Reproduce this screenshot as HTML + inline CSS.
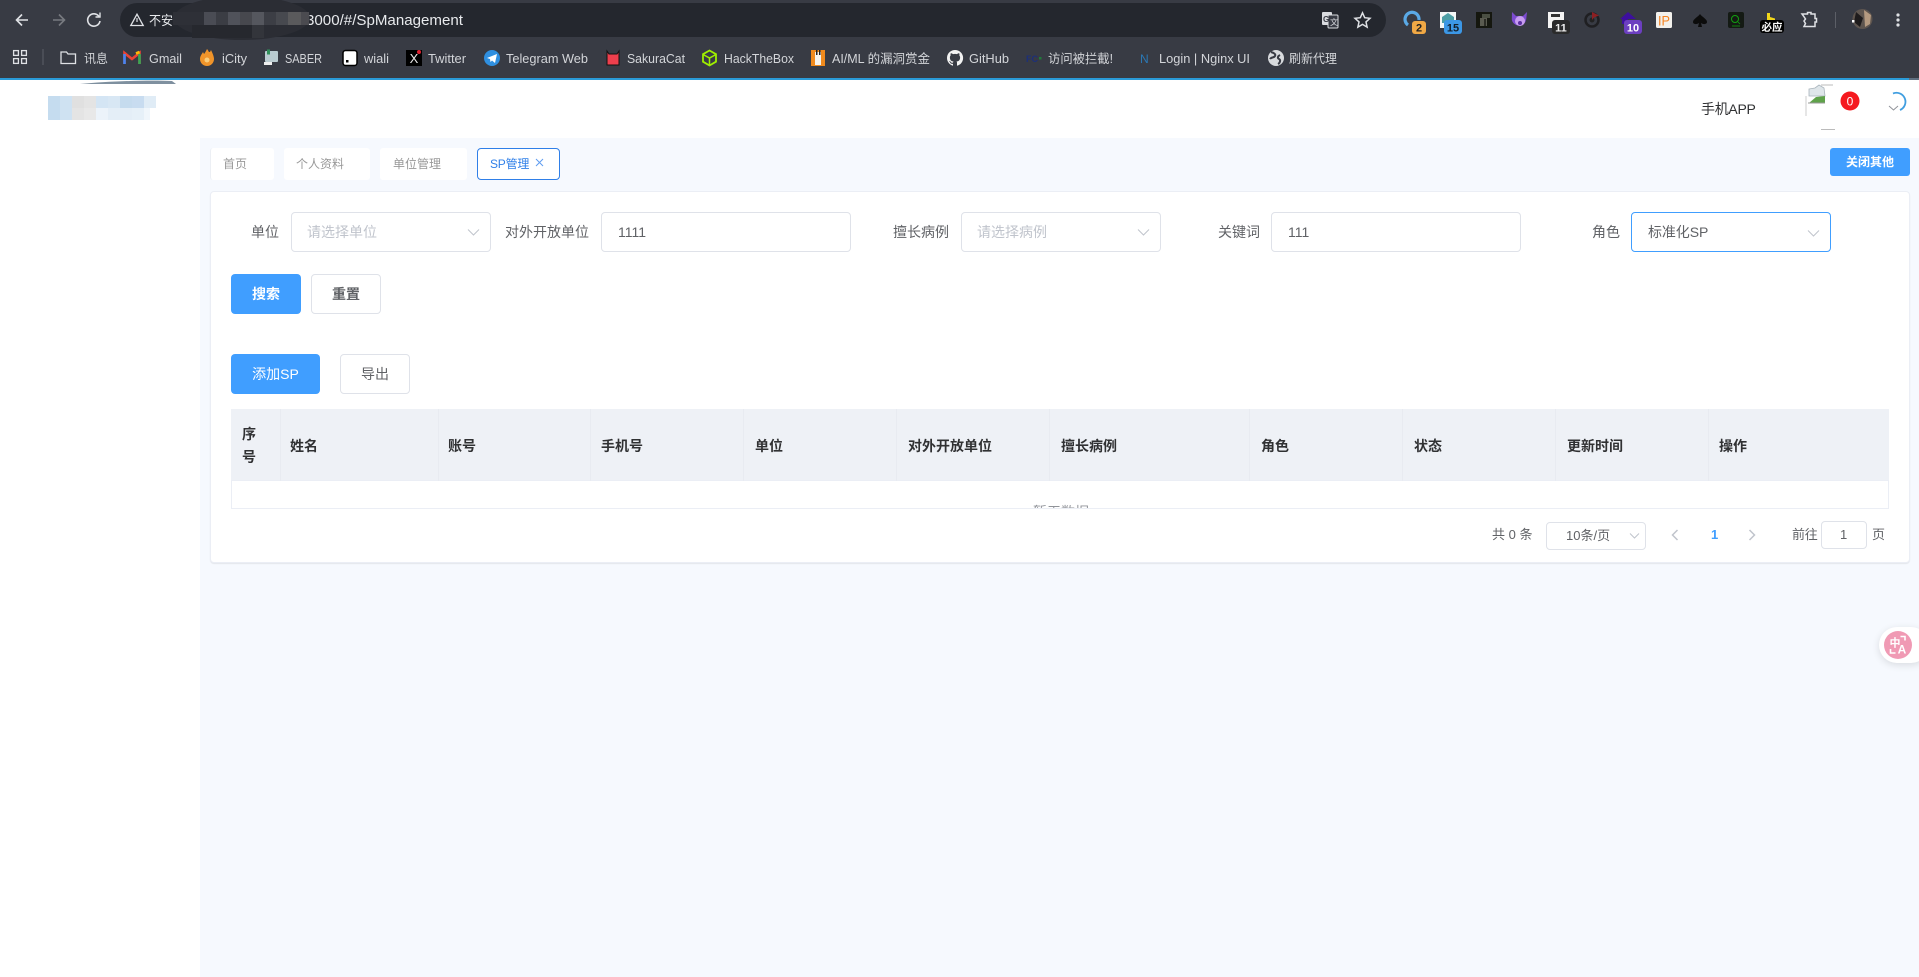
<!DOCTYPE html>
<html lang="zh"><head><meta charset="utf-8"><title>SP管理</title>
<style>
*{box-sizing:border-box}
html,body{margin:0;padding:0;width:1919px;height:977px;overflow:hidden;background:#fff;font-family:"Liberation Sans","Noto Sans CJK SC",sans-serif;color:#606266}
.a{position:absolute}
.t{position:absolute;white-space:nowrap;font-size:14px;line-height:20px}
.box{position:absolute;background:#fff;border:1px solid #dfe2e9;border-radius:4px}
.tab{position:absolute;top:148px;height:32px;background:#fff;border-radius:3px;font-size:12px;line-height:32px;color:#999;white-space:nowrap}
.btn{position:absolute;height:40px;border-radius:4px;font-size:14px;line-height:40px;text-align:center;white-space:nowrap}
.pri{background:#409eff;color:#fff}
.def{background:#fff;border:1px solid #dfe2e9;color:#606266;line-height:38px}
.th{position:absolute;top:436px;font-size:14px;line-height:20px;font-weight:700;color:#303133;white-space:nowrap}
.vl{position:absolute;top:409px;height:72px;width:1px;background:#e8ebf1}
</style></head><body>

<svg class="a" style="left:0;top:0" width="1919" height="80" viewBox="0 0 1919 80" font-family="'Liberation Sans','Noto Sans CJK SC',sans-serif">
<rect width="1919" height="78" fill="#383b44"/>
<rect x="120" y="3" width="1266" height="34" rx="17" fill="#24272e"/>
<rect x="0" y="78" width="1909" height="2" fill="#2a9bd8"/>
<rect x="1909" y="78" width="10" height="2" fill="#5e6f80"/>
<!-- nav -->
<g fill="none" stroke="#dfe1e5" stroke-width="1.6">
<path d="M28 20H17M22 14.5L16.5 20L22 25.5"/>
<path d="M53 20H64M59 14.5L64.5 20L59 25.5" stroke="#777a80"/>
<path d="M99 16.5A6.2 6.2 0 1 0 100 21"/><path d="M100 12.5V17H95.5" stroke-width="1.4"/>
<path d="M137 14.2L130.8 25.5H143.2Z" stroke-width="1.3"/><path d="M137 18v4" stroke-width="1.2"/>
</g>
<text x="149" y="25" font-size="13" fill="#e8eaed" textLength="24" lengthAdjust="spacingAndGlyphs">不安</text>
<text x="306" y="25" font-size="14.5" fill="#e8eaed" textLength="157" lengthAdjust="spacingAndGlyphs">3000/#/SpManagement</text>
<ellipse cx="242" cy="18" rx="68" ry="22" fill="#2b2d34"/>
<g>
<rect x="173" y="12" width="31" height="13" fill="#2e3037"/>
<rect x="204" y="12" width="12" height="13" fill="#4a4c54"/><rect x="216" y="12" width="12" height="13" fill="#3b3d44"/>
<rect x="228" y="12" width="12" height="13" fill="#50525a"/><rect x="240" y="12" width="12" height="13" fill="#47484e"/>
<rect x="252" y="12" width="12" height="13" fill="#55575e"/><rect x="264" y="12" width="12" height="13" fill="#3c3e45"/>
<rect x="276" y="12" width="12" height="13" fill="#47494f"/><rect x="288" y="12" width="13" height="13" fill="#5a5a5c"/>
<rect x="301" y="12" width="8" height="13" fill="#4b4b50"/>
<rect x="192" y="25" width="60" height="13" fill="#26282e"/><rect x="252" y="25" width="12" height="13" fill="#33353b"/>
</g>
<!-- translate + star -->
<rect x="1322" y="12" width="10" height="13" rx="1" fill="#dadce0"/>
<rect x="1328" y="15" width="10" height="13" rx="1" fill="#383b44" stroke="#dadce0"/>
<text x="1323" y="22" font-size="8" font-weight="700" fill="#383b44">G</text>
<text x="1330" y="25" font-size="8" fill="#dadce0">文</text>
<path d="M1362.5 12.8l2.2 4.9 5.3.6-4 3.600 1.100 5.200-4.600-2.700-4.600 2.700 1.100-5.200-4-3.600 5.300-.6z" fill="none" stroke="#dfe1e5" stroke-width="1.5"/>
<!-- extensions -->
<path d="M1408 25A7 7 0 1 1 1419 20" fill="none" stroke="#5aa9e6" stroke-width="3.2"/>
<rect x="1412" y="21" width="14" height="13" rx="3" fill="#f0a845"/>
<text x="1419" y="31.5" font-size="11" font-weight="700" fill="#222" text-anchor="middle">2</text>
<rect x="1440" y="12" width="16" height="16" fill="#f4f7f7"/><path d="M1448 13l6 4v6h-12v-6z" fill="#4d9fa5"/>
<rect x="1444" y="20" width="18" height="14" rx="3" fill="#3c97e6"/>
<text x="1453" y="31.5" font-size="11" font-weight="700" fill="#14202c" text-anchor="middle">15</text>
<rect x="1476" y="12" width="16" height="16" fill="#15170f"/><rect x="1482" y="14" width="8" height="4" fill="#4a4f42"/><rect x="1480" y="18" width="7" height="8" fill="#5a5b50"/><rect x="1484" y="19" width="2" height="7" fill="#2b2c25"/>
<path d="M1512 12l4 4h7l4-4-.8 7.500a7.300 7.300 0 0 1-14.400 0z" fill="#7c4bd0"/><circle cx="1520" cy="21" r="5" fill="#c79cf0"/><circle cx="1520" cy="23" r="2" fill="#5b2fa0"/>
<rect x="1548" y="12" width="16" height="16" fill="#f4f4f4"/><rect x="1551" y="14" width="9" height="3" fill="#333"/>
<rect x="1552" y="20" width="18" height="14" rx="3" fill="#2a2a2a"/>
<text x="1561" y="31.5" font-size="11" font-weight="700" fill="#eee" text-anchor="middle">11</text>
<circle cx="1592" cy="20" r="6.5" fill="none" stroke="#1f1f22" stroke-width="2.5"/><circle cx="1592" cy="20" r="2.5" fill="#222"/><path d="M1592 20V12l7 3.5-5 2z" fill="#8c1f22"/>
<path d="M1628 12l8 7h-16z" fill="#3d0f9e"/><rect x="1622" y="19" width="6" height="5" fill="#3d0f9e"/>
<rect x="1624" y="20" width="18" height="14" rx="3" fill="#6c3fc0"/>
<text x="1633" y="31.5" font-size="11" font-weight="700" fill="#fff" text-anchor="middle">10</text>
<rect x="1656" y="12" width="16" height="16" rx="1.5" fill="#f2f0ec"/>
<text x="1664" y="25.5" font-size="14" fill="#f5821f" text-anchor="middle" textLength="12" lengthAdjust="spacingAndGlyphs">IP</text>
<path d="M1700 14c2 3 7 5 7 8 0 2-3 3-6 1l1 4h-4l1-4c-3 2-6 1-6-1 0-3 5-5 7-8z" fill="#0c0c0c"/>
<rect x="1728" y="12" width="16" height="16" rx="2" fill="#141a14"/><circle cx="1735" cy="19" r="3.5" fill="none" stroke="#12a012" stroke-width="1"/><path d="M1738 22l2 2M1732 26h8" stroke="#12a012" stroke-width=".8"/>
<path d="M1767 13h3v4l5 1.500v1.500h-8z" fill="#f2d71a"/>
<rect x="1760" y="20" width="24" height="13" rx="3" fill="#000"/>
<text x="1772" y="30.5" font-size="10.5" font-weight="700" fill="#fff" text-anchor="middle">必应</text>
<path d="M1802 14h5.500v-1.500h3.500v1.500h4v4.500h1.500v3.500h-1.500v4.500h-11l1.500-3-1.500-2.500 1.500-2-2-3z" fill="none" stroke="#dfe1e5" stroke-width="1.5"/>
<rect x="1835" y="12" width="1" height="16" fill="#5c5f67"/>
<circle cx="1862.5" cy="19" r="10" fill="#5e554f"/><path d="M1856 12l7 6-3 9-6-5z" fill="#1e1b1c"/><path d="M1864 10l7 5-1 9-5 3z" fill="#b59a80"/><rect x="1852" y="20" width="2.5" height="2.5" fill="#fff"/>
<g fill="#dfe1e5"><circle cx="1898" cy="15" r="1.6"/><circle cx="1898" cy="20" r="1.6"/><circle cx="1898" cy="25" r="1.6"/></g>
<!-- bookmarks -->
<g fill="none" stroke="#dfe1e5" stroke-width="1.3">
<rect x="13.6" y="50.6" width="4.8" height="4.8"/><rect x="21.6" y="50.6" width="4.8" height="4.8"/><rect x="13.6" y="58.6" width="4.8" height="4.8"/><rect x="21.6" y="58.6" width="4.8" height="4.8"/>
<path d="M61 52h5.500l1.500 2h7.500v9.500H61z"/></g>
<rect x="42.5" y="49" width="1" height="16" fill="#5c5f67"/>
<path d="M124.500 64V53l7.500 6 7.500-6v11" fill="none" stroke="#ea4335" stroke-width="2.600"/><path d="M124.500 64V54" stroke="#4285f4" stroke-width="2.600"/><path d="M139.500 64V54" stroke="#34a853" stroke-width="2.600"/><path d="M136 53.500l3.500-1.500" stroke="#fbbc04" stroke-width="2.600"/>
<path d="M207 49c2 2 1 3 3 3l1-2c2 4 3 7 3 9a7 7 0 0 1-14 0c0-3 2-5 3-7l1 2c1-1 2-3 3-5z" fill="#f0942a"/><circle cx="207" cy="60" r="2.500" fill="#f9cd7c"/>
<rect x="265" y="51" width="13" height="11" rx="1" fill="#b9cbd0"/><rect x="267" y="49.500" width="3" height="5" fill="#2f8f5a"/><rect x="264" y="62" width="8" height="3" fill="#eee"/>
<rect x="343" y="50.500" width="14" height="15" rx="2.500" fill="#fff" stroke="#000" stroke-width="1.500"/><rect x="346" y="60" width="2.500" height="2.500" fill="#000"/>
<rect x="406" y="50" width="16" height="16" fill="#000"/>
<text x="414" y="63" font-size="13" fill="#e8e8e8" text-anchor="middle">X</text><circle cx="419" cy="52" r="2" fill="#e02030"/>
<circle cx="492" cy="58" r="8" fill="#2f8fe0"/><path d="M487 58l10-4-2 9-3-2.500-1.500 1.500-.5-3z" fill="#fff"/>
<path d="M607 51l2 3h8l2-3v14h-12z" fill="#ee3f4d" stroke="#111" stroke-width="1"/>
<path d="M709.500 50.500l6.500 3.700v7.500l-6.500 3.800-6.500-3.800v-7.500z" fill="none" stroke="#9fef00" stroke-width="1.800"/><path d="M703 54.500l6.500 3.500 6.500-3.500M709.500 58v7" fill="none" stroke="#9fef00" stroke-width="1.500"/>
<rect x="811" y="50" width="14" height="16" fill="#f08a1d"/><rect x="815" y="52" width="6" height="13" fill="#f5f3ee"/><rect x="816" y="50" width="1.500" height="5" fill="#222"/><rect x="819" y="50" width="1.500" height="5" fill="#222"/>
<path d="M955 50a8 8 0 0 0-2.500 15.600c.4.100.5-.2.500-.4v-1.400c-2.200.5-2.700-1-2.700-1-.4-.9-.9-1.200-.9-1.200-.7-.5.100-.5.100-.5.800.1 1.200.8 1.200.8.700 1.200 1.900.9 2.300.7.100-.5.300-.9.500-1.100-1.800-.2-3.600-.9-3.600-4 0-.9.300-1.600.8-2.100-.1-.2-.4-1 .1-2.100 0 0 .7-.2 2.200.8a7.600 7.600 0 0 1 4 0c1.500-1 2.200-.8 2.200-.8.500 1.100.2 1.900.1 2.100.5.600.8 1.300.8 2.100 0 3.100-1.900 3.800-3.600 4 .3.200.5.700.5 1.500v2.200c0 .2.100.5.600.4A8 8 0 0 0 955 50z" fill="#f2f2f2"/>
<text x="1026" y="62" font-size="9" font-weight="700" fill="#1c2f7a" textLength="12">FC</text><rect x="1039" y="57" width="2.500" height="2.500" fill="#1f7a3a"/>
<text x="1140" y="63" font-size="12" fill="#2a78b5">N</text>
<circle cx="1276" cy="58" r="8" fill="#d8dadd"/><path d="M1271 52c3 1 5 2 4 4s-4 1-5 3M1280 55c-2 1-3 3-1 4s1 4-1 5" fill="none" stroke="#383b44" stroke-width="2"/>
<g font-size="12.500" fill="#d3d5d9">
<text x="84" y="63" textLength="24" lengthAdjust="spacingAndGlyphs">讯息</text>
<text x="149" y="63" textLength="33" lengthAdjust="spacingAndGlyphs">Gmail</text>
<text x="222" y="63" textLength="25" lengthAdjust="spacingAndGlyphs">iCity</text>
<text x="285" y="63" textLength="37" lengthAdjust="spacingAndGlyphs">SABER</text>
<text x="364" y="63" textLength="25" lengthAdjust="spacingAndGlyphs">wiali</text>
<text x="428" y="63" textLength="38" lengthAdjust="spacingAndGlyphs">Twitter</text>
<text x="506" y="63" textLength="82" lengthAdjust="spacingAndGlyphs">Telegram Web</text>
<text x="627" y="63" textLength="58" lengthAdjust="spacingAndGlyphs">SakuraCat</text>
<text x="724" y="63" textLength="70" lengthAdjust="spacingAndGlyphs">HackTheBox</text>
<text x="832" y="63" textLength="98" lengthAdjust="spacingAndGlyphs">AI/ML 的漏洞赏金</text>
<text x="969" y="63" textLength="40" lengthAdjust="spacingAndGlyphs">GitHub</text>
<text x="1048" y="63" textLength="65" lengthAdjust="spacingAndGlyphs">访问被拦截!</text>
<text x="1159" y="63" textLength="91" lengthAdjust="spacingAndGlyphs">Login | Nginx UI</text>
<text x="1289" y="63" textLength="48" lengthAdjust="spacingAndGlyphs">刷新代理</text>
</g>
</svg>

<!-- smudge + logo -->
<svg class="a" style="left:0;top:80px" width="200" height="42" viewBox="0 0 200 42">
<path d="M80 4C110 1 150 0 172 1L176 4Z" fill="#7f909f"/>
<g>
<rect x="48" y="16" width="12" height="12" fill="#c5dcef"/><rect x="60" y="16" width="12" height="12" fill="#cfe2f2"/><rect x="72" y="16" width="12" height="12" fill="#e0e0e0"/><rect x="84" y="16" width="12" height="12" fill="#e4e4e4"/><rect x="96" y="16" width="12" height="12" fill="#d4e5f4"/><rect x="108" y="16" width="12" height="12" fill="#d8e7f4"/><rect x="120" y="16" width="12" height="12" fill="#c5dbee"/><rect x="132" y="16" width="12" height="12" fill="#c8dcf0"/><rect x="144" y="16" width="12" height="12" fill="#e0ecf6"/>
<rect x="48" y="28" width="12" height="12" fill="#c5dcef"/><rect x="60" y="28" width="12" height="12" fill="#cfe2f2"/><rect x="72" y="28" width="12" height="12" fill="#e4e4e4"/><rect x="84" y="28" width="12" height="12" fill="#e8e8e8"/><rect x="96" y="28" width="12" height="12" fill="#ecf3fa"/><rect x="108" y="28" width="12" height="12" fill="#e4eef7"/><rect x="120" y="28" width="12" height="12" fill="#e4eef7"/><rect x="132" y="28" width="12" height="12" fill="#e6f0f8"/><rect x="144" y="28" width="6" height="12" fill="#f0f6fb"/>
</g>
</svg>

<!-- header right -->
<div class="t" style="left:1701px;top:99px;color:#303133;letter-spacing:-.3px">手机APP</div>
<svg class="a" style="left:1800px;top:82px" width="119" height="50" viewBox="1800 82 119 50">
<path d="M1806 96v20" stroke="#ccc" fill="none"/><path d="M1821 85h12M1821 129.500h14" stroke="#bbb" fill="none"/>
<path d="M1809 89l6-1 4-3 5 3 1 8h-16z" fill="#dfe6ea" stroke="#a9b4bc" stroke-width=".8"/><path d="M1809 103l7-6 9-1v7z" fill="#5fa24a"/><path d="M1808 103h17" stroke="#999"/>
<circle cx="1850" cy="101" r="9.500" fill="#f5191f"/>
<text x="1850" y="105.500" font-size="12" fill="#fff" text-anchor="middle" font-family="'Liberation Sans',sans-serif">0</text>
<path d="M1893 93.500A8.500 8.500 0 0 1 1900 110" fill="none" stroke="#409ee0" stroke-width="1.800"/>
<path d="M1889 106l4.500 4 4.500-4" fill="none" stroke="#909399"/>
</svg>

<!-- main bg -->
<div class="a" style="left:200px;top:138px;width:1719px;height:839px;background:#f6f9fe"></div>

<!-- tabs -->
<div class="tab" style="left:210px;width:64px;padding-left:12px;border-left:1px solid #eceff4">首页</div>
<div class="tab" style="left:284px;width:86px;padding-left:12px">个人资料</div>
<div class="tab" style="left:380px;width:87px;padding-left:13px">单位管理</div>
<div class="tab" style="left:477px;width:83px;padding-left:12px;border:1px solid #2f7fe8;line-height:31px;color:#2f7fe8;border-radius:4px;letter-spacing:-.2px">SP管理</div>
<svg class="a" style="left:535px;top:158px" width="9" height="9"><path d="M1 1l7 7M8 1l-7 7" stroke="#5f9cf0" fill="none"/></svg>
<div class="a" style="left:1830px;top:148px;width:80px;height:28px;background:#409eff;border-radius:3px;color:#fff;font-size:12px;font-weight:700;line-height:28px;text-align:center">关闭其他</div>

<!-- card -->
<div class="a" style="left:210px;top:191px;width:1700px;height:372px;background:#fff;border:1px solid #ebeef5;border-radius:4px;box-shadow:0 1px 1px rgba(0,0,0,.08)"></div>

<!-- form -->
<div class="t" style="left:251px;top:222px">单位</div>
<div class="box" style="left:291px;top:212px;width:200px;height:40px"></div>
<div class="t" style="left:307px;top:222px;color:#c0c4cc">请选择单位</div>
<svg class="a" style="left:467px;top:228px" width="13" height="9"><path d="M1 1.500l5.500 5.500 5.500-5.500" stroke="#c0c4cc" fill="none"/></svg>

<div class="t" style="left:505px;top:222px">对外开放单位</div>
<div class="box" style="left:601px;top:212px;width:250px;height:40px"></div>
<div class="t" style="left:618px;top:222px">1111</div>

<div class="t" style="left:893px;top:222px">擅长病例</div>
<div class="box" style="left:961px;top:212px;width:200px;height:40px"></div>
<div class="t" style="left:977px;top:222px;color:#c0c4cc">请选择病例</div>
<svg class="a" style="left:1137px;top:228px" width="13" height="9"><path d="M1 1.500l5.500 5.500 5.500-5.500" stroke="#c0c4cc" fill="none"/></svg>

<div class="t" style="left:1218px;top:222px">关键词</div>
<div class="box" style="left:1271px;top:212px;width:250px;height:40px"></div>
<div class="t" style="left:1288px;top:222px">111</div>

<div class="t" style="left:1592px;top:222px">角色</div>
<div class="box" style="left:1631px;top:212px;width:200px;height:40px;border-color:#409eff"></div>
<div class="t" style="left:1648px;top:222px;letter-spacing:-.1px">标准化SP</div>
<svg class="a" style="left:1807px;top:229px" width="13" height="9"><path d="M1 1.500l5.500 5.500 5.500-5.500" stroke="#c0c4cc" fill="none"/></svg>

<div class="btn pri" style="left:231px;top:274px;width:70px;font-weight:700">搜索</div>
<div class="btn def" style="left:311px;top:274px;width:70px;font-weight:700">重置</div>
<div class="btn pri" style="left:231px;top:354px;width:89px">添加SP</div>
<div class="btn def" style="left:340px;top:354px;width:70px">导出</div>

<!-- table -->
<div class="a" style="left:231px;top:409px;width:1658px;height:100px;background:#fff;border:1px solid #ebeef5;overflow:hidden">
 <div class="a" style="left:0;top:85px;width:1656px;font-size:14px;line-height:34px;color:#909399;height:34px"><span class="a" style="left:801px;top:0">暂无数据</span></div>
</div>
<div class="a" style="left:231px;top:409px;width:1658px;height:72px;background:#eef1f6;border-bottom:1px solid #ebeef5"></div>
<div class="vl" style="left:280px"></div><div class="vl" style="left:438px"></div><div class="vl" style="left:590px"></div><div class="vl" style="left:743px"></div><div class="vl" style="left:896px"></div><div class="vl" style="left:1049px"></div><div class="vl" style="left:1249px"></div><div class="vl" style="left:1402px"></div><div class="vl" style="left:1555px"></div><div class="vl" style="left:1708px"></div>
<div class="th" style="left:242px;top:424px">序</div><div class="th" style="left:242px;top:447px">号</div>
<div class="th" style="left:290px">姓名</div>
<div class="th" style="left:448px">账号</div>
<div class="th" style="left:601px">手机号</div>
<div class="th" style="left:755px">单位</div>
<div class="th" style="left:908px">对外开放单位</div>
<div class="th" style="left:1061px">擅长病例</div>
<div class="th" style="left:1261px">角色</div>
<div class="th" style="left:1414px">状态</div>
<div class="th" style="left:1567px">更新时间</div>
<div class="th" style="left:1719px">操作</div>

<!-- pagination -->
<div class="t" style="left:1492px;top:525px;font-size:13px">共 0 条</div>
<div class="box" style="left:1546px;top:522px;width:100px;height:28px"></div>
<div class="t" style="left:1566px;top:526px;font-size:13px">10条/页</div>
<svg class="a" style="left:1629px;top:532px" width="11" height="8"><path d="M1 1.500l4.500 4.500 4.500-4.500" stroke="#c0c4cc" fill="none"/></svg>
<svg class="a" style="left:1671px;top:529px" width="8" height="12"><path d="M6.500 1l-5 5 5 5" stroke="#c0c4cc" stroke-width="1.500" fill="none"/></svg>
<div class="t" style="left:1711px;top:525px;font-size:13px;font-weight:700;color:#409eff">1</div>
<svg class="a" style="left:1748px;top:529px" width="8" height="12"><path d="M1.500 1l5 5-5 5" stroke="#c0c4cc" stroke-width="1.500" fill="none"/></svg>
<div class="t" style="left:1792px;top:525px;font-size:13px;letter-spacing:-.3px">前往</div>
<div class="box" style="left:1821px;top:521px;width:46px;height:28px"></div>
<div class="t" style="left:1840px;top:525px;font-size:13px">1</div>
<div class="t" style="left:1872px;top:525px;font-size:13px">页</div>

<!-- floating translate -->
<div class="a" style="left:1879px;top:627px;width:50px;height:36px;background:#fff;border-radius:18px;box-shadow:0 2px 8px rgba(0,0,0,.12)"></div>
<svg class="a" style="left:1884px;top:631px" width="28" height="28" viewBox="0 0 28 28" font-family="'Liberation Sans','Noto Sans CJK SC',sans-serif">
<circle cx="14" cy="14" r="14" fill="#f09ab4"/>
<text x="11" y="15.500" font-size="11" font-weight="700" fill="#fff" text-anchor="middle">中</text>
<text x="18" y="22.500" font-size="12" font-weight="700" fill="#fff" text-anchor="middle">A</text>
<path d="M16.500 5.500h4.500v4M6.500 18v4h5" fill="none" stroke="#fff" stroke-width="1.600"/>
</svg>
</body></html>
